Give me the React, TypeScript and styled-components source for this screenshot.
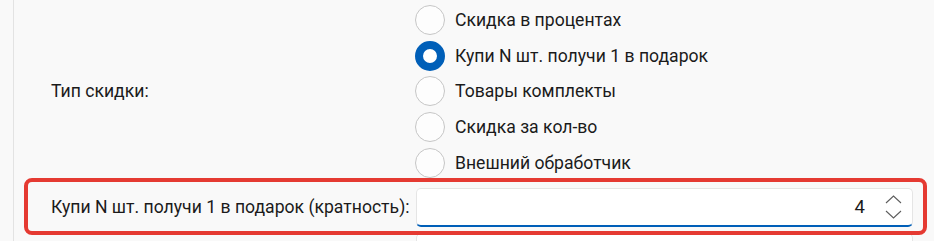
import styled, { createGlobalStyle } from 'styled-components';
import { useState } from 'react';

const GlobalStyle = createGlobalStyle`
  html, body {
    margin: 0;
    padding: 0;
    background: #f9f9f9;
    overflow: hidden;
  }
  body {
    font-family: Roboto, 'Noto Sans', sans-serif;
    color: #1b1b1b;
  }
`;

const discountTypes = [
  'Скидка в процентах',
  'Купи N шт. получи 1 в подарок',
  'Товары комплекты',
  'Скидка за кол-во',
  'Внешний обработчик',
];

export default function App() {
  const [type, setType] = useState(1);
  const [multiple] = useState(4);

  return (
    <>
      <GlobalStyle />
      <Page>
        <Panel>
          <Row>
            <Label>Тип скидки:</Label>
            <RadioGroup>
              {discountTypes.map((t, i) => (
                <RadioItem key={t} onClick={() => setType(i)}>
                  <RadioCircle $checked={type === i} />
                  <RadioText>{t}</RadioText>
                </RadioItem>
              ))}
            </RadioGroup>
          </Row>
          <Row $highlight>
            <Label>Купи N шт. получи 1 в подарок (кратность):</Label>
            <NumberBox $focused>
              <NumberValue>{multiple}</NumberValue>
              <Spinner>
                <svg width="17" height="9" viewBox="0 0 17 9">
                  <polyline points="1,8 8.5,1 16,8" fill="none" stroke="#5d5d5d" strokeWidth="1.1" />
                </svg>
                <svg width="17" height="9" viewBox="0 0 17 9">
                  <polyline points="1,1 8.5,8 16,1" fill="none" stroke="#5d5d5d" strokeWidth="1.1" />
                </svg>
              </Spinner>
            </NumberBox>
          </Row>
          <Row $next>
            <Label />
            <NumberBox />
          </Row>
        </Panel>
      </Page>
    </>
  );
}

const Page = styled.div`
  height: 241px;
  padding-left: 13px;
  background: #f9f9f9;
`;

const Panel = styled.div`
  height: 100%;
  border-left: 1px solid #e3e3e3;
  padding: 2px 0 0 10px;
  display: flex;
  flex-direction: column;
`;

const Row = styled.div<{ $highlight?: boolean; $next?: boolean }>`
  display: grid;
  grid-template-columns: 387px 498px;
  align-items: center;
  width: 895px;
  padding: ${(p) => (p.$highlight ? '6px 0 4px' : '0')};
  border: ${(p) => (p.$highlight ? '4px solid #e53a32' : 'none')};
  border-left: 4px solid ${(p) => (p.$highlight ? '#e53a32' : 'transparent')};
  border-radius: 8px;
  margin-top: ${(p) => (p.$highlight ? '-3px' : p.$next ? '-2px' : '0')};
  position: relative;
  z-index: ${(p) => (p.$highlight ? 1 : 0)};
`;

const Label = styled.div`
  padding-left: 23px;
  font-size: 17.6px;
  line-height: 26px;
  white-space: nowrap;
`;

const RadioGroup = styled.div`
  display: flex;
  flex-direction: column;
`;

const RadioItem = styled.div`
  display: flex;
  align-items: center;
  gap: 10px;
  height: 35.75px;
  cursor: pointer;
`;

const RadioCircle = styled.span<{ $checked: boolean }>`
  box-sizing: border-box;
  width: 30px;
  height: 30px;
  border-radius: 50%;
  flex-shrink: 0;
  background: ${(p) => (p.$checked ? '#ffffff' : '#fdfdfd')};
  border: ${(p) => (p.$checked ? '8px solid #005fb8' : '1.5px solid #c6c6c6')};
`;

const RadioText = styled.span`
  font-size: 17.6px;
  line-height: 26px;
`;

const NumberBox = styled.div<{ $focused?: boolean }>`
  box-sizing: border-box;
  height: 39px;
  margin-left: 1px;
  display: flex;
  align-items: center;
  justify-content: flex-end;
  background: #ffffff;
  border: 1px solid #e5e5e5;
  border-bottom: ${(p) => (p.$focused ? '2px solid #005fb8' : '1px solid #e5e5e5')};
  border-radius: 5px;
`;

const NumberValue = styled.span`
  font-size: 18.5px;
  line-height: 26px;
  padding-right: 9px;
`;

const Spinner = styled.div`
  width: 38px;
  display: flex;
  flex-direction: column;
  align-items: center;
  gap: 6px;
`;
